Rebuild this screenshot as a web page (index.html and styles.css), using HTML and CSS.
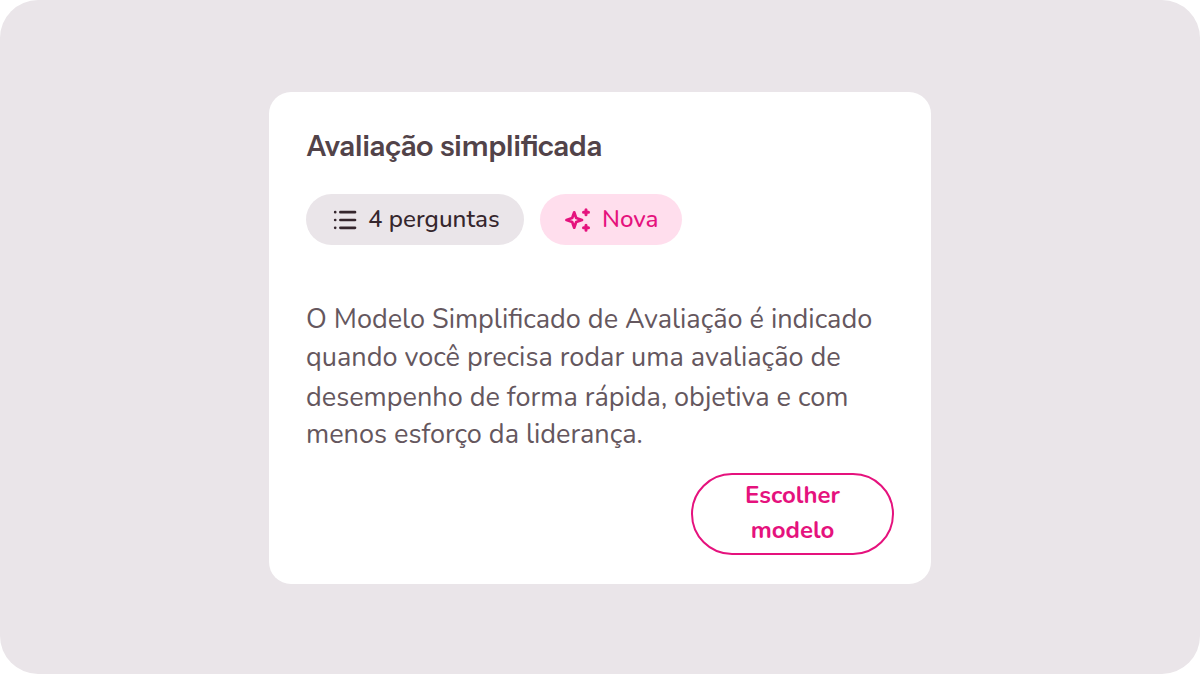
FILE: index.html
```html
<!DOCTYPE html>
<html lang="pt-BR">
<head>
<meta charset="utf-8">
<title>Avaliação simplificada</title>
<link rel="stylesheet" href="styles.css">
</head>
<body>
<main class="stage">
  <article class="card">
    <h1 class="title">Avaliação simplificada</h1>
    <div class="tags">
      <span class="tag tag-count">
        <svg class="icon" width="24" height="24" viewBox="0 0 24 24" fill="none" stroke="currentColor" stroke-width="2.7" stroke-linecap="round">
          <path d="M7.4 4.2H22M7.4 12H22M7.4 19.8H22"/>
          <path d="M2.2 4.2H2.21M2.2 12H2.21M2.2 19.8H2.21"/>
        </svg>
        <span class="tag-label">4 perguntas</span>
      </span>
      <span class="tag tag-new">
        <svg class="icon" width="26" height="26" viewBox="0 0 26 26" fill="none" stroke="currentColor" stroke-linecap="round" stroke-linejoin="round">
          <path stroke-width="2.7" d="M9.2 5.3 11.2 11 17 13 11.2 15 9.2 20.7 7.2 15 1.5 13 7.2 11Z"/>
          <path stroke-width="3" d="M21 2.7V7.7M18.5 5.2H23.5M21 18.3V23.3M18.5 20.8H23.5"/>
        </svg>
        <span class="tag-label">Nova</span>
      </span>
    </div>
    <p class="description">
      <span class="line line-1">O Modelo Simplificado de Avaliação é indicado</span>
      <span class="line line-2">quando você precisa rodar uma avaliação de</span>
      <span class="line line-3">desempenho de forma rápida, objetiva e com</span>
      <span class="line line-4">menos esforço da liderança.</span>
    </p>
    <button class="choose" type="button"><span>Escolher</span><span>modelo</span></button>
  </article>
</main>
</body>
</html>
```
FILE: styles.css
```css
* { box-sizing: border-box; }
body { margin: 0; background: #fff; font-family: Nunito, Lato, sans-serif; }
.stage {
  width: 1200px; height: 674px; border-radius: 38px; background: #eae5e9;
  display: flex; justify-content: center; align-items: flex-start; padding-top: 92px;
}
.card {
  width: 662px; height: 492px; border-radius: 22px; background: #fff;
  padding: 34px 37px 0; display: flex; flex-direction: column;
}
.title {
  margin: 0; height: 40px; line-height: 40px; color: #524349;
  font-family: "Instrument Sans", Inter, sans-serif; font-size: 28.4px; font-weight: 600; word-spacing: 1.5px;
  white-space: nowrap;
}
.tags { display: flex; gap: 16px; margin-top: 28px; }
.tag { display: flex; align-items: center; height: 51px; border-radius: 26px; white-space: nowrap; font-size: 24.2px; font-weight: 550; }
.tag-label { line-height: 34px; }
.tag-count { width: 218px; padding-left: 27px; gap: 11px; background: #eae5e9; color: #35262d; }
.tag-new { width: 142px; padding-left: 25px; gap: 11px; background: #ffdeed; color: #e5127d; }
.icon { flex: none; }
.description { margin: 56px 0 0; color: #65575e; font-size: 27.07px; }
.line { display: block; line-height: 38px; white-space: nowrap; }
.line-1 { height: 38px; }
.line-2 { height: 40px; }
.line-3 { height: 37px; }
.line-4 { height: 39px; }
.choose {
  align-self: flex-end; width: 203px; height: 82px; margin-top: 18px; padding: 0 0 2px;
  border: 2px solid #e5127d; border-radius: 41px; background: #fff; color: #e5127d;
  font: 700 24px/35px Nunito, Lato, sans-serif; display: flex; flex-direction: column; align-items: center; justify-content: center;
}
```
